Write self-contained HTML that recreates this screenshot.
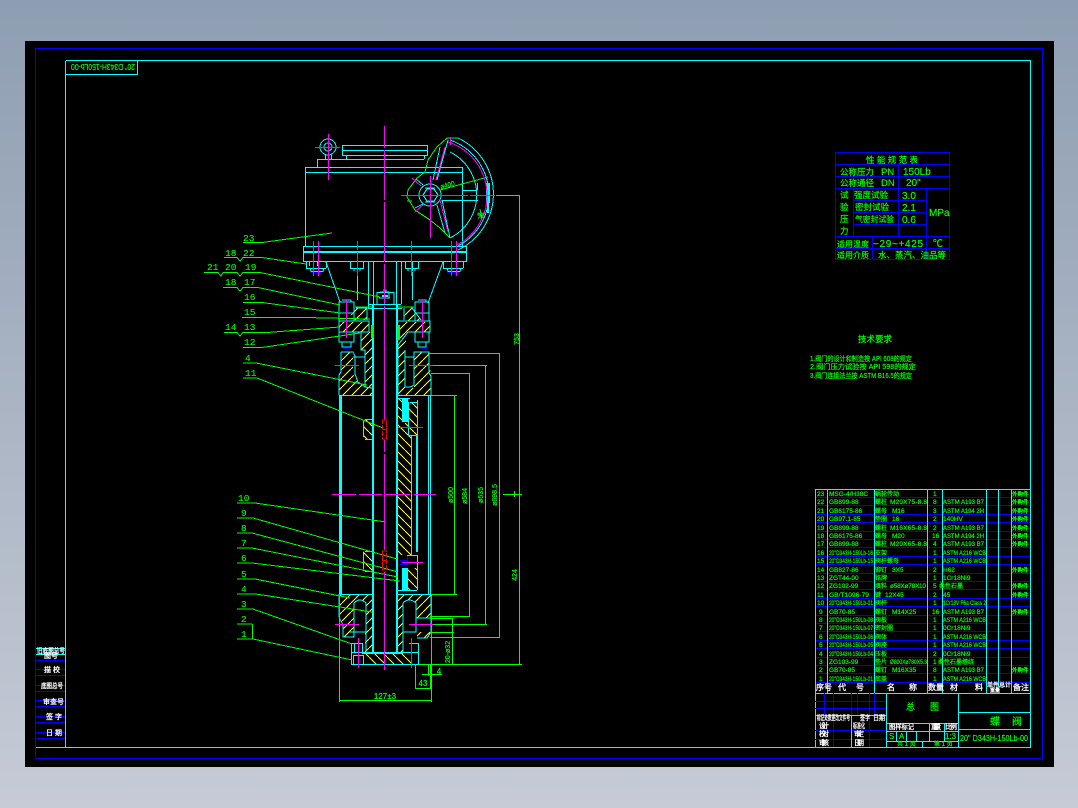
<!DOCTYPE html>
<html lang="zh">
<head>
<meta charset="utf-8">
<title>20" D343H-150Lb-00</title>
<style>
html,body{margin:0;padding:0;width:1078px;height:808px;overflow:hidden;background:linear-gradient(#8e9eb2,#c6cbd6)}
svg{position:absolute;left:0;top:0;display:block}
svg *{shape-rendering:crispEdges}
text{font-family:"Liberation Sans","Noto Sans CJK SC",sans-serif;fill:#0f0;stroke:#0f0;stroke-width:.2px;font-size:8px}
.w text{fill:#fff;stroke:#fff;stroke-width:.3px}
.l text{font-size:9.5px;font-family:"Liberation Mono","Noto Sans CJK SC",monospace;stroke-width:.1px}
.s text{font-size:6.5px}
.n text{font-size:6px}
.o text{font-size:5.5px;stroke-width:.35px}
.t text{font-size:7px}
</style>
</head>
<body>
<svg width="1078" height="808" viewBox="0 0 1078 808">
<defs>
<pattern id="h1" width="9" height="9" patternUnits="userSpaceOnUse"><path d="M0 9L9 0" stroke="#ff0" stroke-width="1"/></pattern>
<pattern id="h2" width="9" height="9" patternUnits="userSpaceOnUse"><path d="M0 0L9 9" stroke="#ff0" stroke-width="1"/></pattern>
</defs>
<rect x="25" y="41" width="1029" height="726" fill="#000"/>
<g fill="none">
<rect x="35.500" y="48.500" width="1007" height="710" stroke="#00f"/>
<path d="M65.500 61V747.500M36 747.500H1030.500V60.500H66" stroke="#0ff"/>
<path d="M137.500 60.500V74.500H66" stroke="#0ff"/>
<path d="M36 648.500H65M36 654.500H65" stroke="#0ff"/>
<path d="M36 660.500H65M36 669.500H65M36 675.500H65M36 685.500H65M36 691.500H65M36 700.500H65M36 706.500H65M36 716.500H65M36 722.500H65M36 732.500H65M36 738.500H65" stroke="#00f"/>
<path d="M835.500 152.500H949.500V259.500H835.500ZM835.500 164.500H949.500M835.500 176.500H949.500M835.500 188.500H949.500M853 200.500H926M853 212.500H926M853 224.500H926M835.500 236.500H949.500M835.500 248.500H949.500M853.500 188V236M898.500 164V188M898.500 188V236M926.500 188V259M872.500 236V259" stroke="#00f"/>
<path d="M815 497.500H1030M815 505.500H1030M815 514.500H1030M815 522.500H1030M815 531.500H1030M815 539.500H1030M815 547.500H1030M815 556.500H1030M815 564.500H1030M815 573.500H1030M815 581.500H1030M815 589.500H1030M815 598.500H1030M815 606.500H1030M815 615.500H1030M815 623.500H1030M815 631.500H1030M815 640.500H1030M815 648.500H1030M815 657.500H1030M815 665.500H1030M815 673.500H1030M815 682.500H1030" stroke="#00f"/>
<path d="M815.500 489.500H1030M815.500 489V747M827.500 489V693M874.500 489V693M927.500 489V693M942.500 489V693M986.500 489V693M998.500 489V687M1011.500 489V693M815 693.500H1030" stroke="#0ff"/>
<path d="M824.500 693V715M833.500 693V747M857.500 693V715M869.500 693V747M874.500 693V715M851.500 693V715M815 701.500H886M815 708.500H886M815 715.500H886M815 730.500H886M815 739.500H886" stroke="#00f"/>
<path d="M851.500 715V747M886.500 693V747M958.500 693V747M958 712.500H1030M958 729.500H1030M815 715.500H886M886 723.500H958M886 731.500H958M886 741.500H958M896.500 731V741M906.500 731V741M916.500 731V741M929.500 723V741M944.500 723V741M922.500 741V747" stroke="#0ff"/>
</g>

<!-- hatching -->
<g fill="url(#h1)" stroke="none">
<path d="M356 307H367V320H348Z"/>
<path d="M339 322H369V332H339Z"/>
<path d="M361 332H372V388H365V350H361Z"/>
<path d="M341 352H353V374L357 382L365 388H372V395H339V375L341 372Z"/>
<path d="M404 307H412L421 321H404Z"/>
<path d="M397 322H430V332H408L398 345Z"/>
<path d="M397 345L406 334L405 388H414V352H428L431 375V395H397Z"/>
<path d="M339 594H372V652H365V632H366V603Q360 597 354 603V637H343V625L339 617Z"/>
<path d="M397 594H431V618H416V603Q409 597 403 603V652H397Z"/>
<path d="M417 632H431V638H417Z"/>
</g>
<g fill="url(#h2)" stroke="none">
<path d="M396 398H402V423H411V555H396Z"/>
<path d="M408 402H417V435H408Z"/>
<path d="M408 568H417V590H408Z"/>
<path d="M363 419H373V439H363Z"/>
<path d="M363 551H373V571H363Z"/>
<path d="M363 653H403L418 664H372Z"/>
</g>

<!-- cyan drawing -->
<g fill="none" stroke="#0ff" stroke-width="1">
<path d="M305.500 167V246M305 167.500H462M305 172.500H462M462.500 167V246M317.500 159V167M317 159.500H424M342.500 145V156M342 145.500H427M342 150.500H427M342 155.500H427M427.500 145V156M346.500 156V159M424.500 156V159M325.500 155V159M331.500 155V159"/>
<path d="M442 200.500H478M462 190.500H477M477.500 183V190"/>
<path d="M303.500 246V262M303 246.500H466M303 251.500H466M303 252.500H466M303 261.500H466M466.500 246V262"/>
<path d="M368.500 262V304M373.500 262V304M396.500 262V304M401.500 262V304M357.500 262V300M412.500 262V300"/>
<path d="M306.500 262V268M326.500 262V268M306 268.500H326M309.500 262V266M317.500 262V266M310 268L311 271.500H323L324 268"/>
<path d="M350.500 262V268M363.500 262V268M350 268.500H364M354 268V271M360 268V271"/>
<path d="M405.500 262V268M418.500 262V268M405 268.500H419M408 268V271M415 268V271"/>
<path d="M443.500 262V268M463.500 262V268M443 268.500H463M447 268L448 271.500H460L461 268"/>
<path d="M372.500 304V652M373.500 304V652M396.500 304V652M397.500 304V652"/>
<path d="M368 304.500H401M368 308.500H402M368.500 304V308"/>
<path d="M339.500 395V594M340.500 395V594M341.500 395V594"/>
<path d="M372 395.500H339M372 594.500H339M397 395.500H431M397 594.500H431M430.500 395V594M428.500 395V594M417.500 400V552M416.500 435V552M411.500 435V555"/>
<path d="M363.500 421V437M365 419.500H373M365 439.500H373M363.500 553V569M365 551.500H373M365 571.500H373"/>
<path d="M396 398.500H410M410 402.500H417M408.500 402V435M408 435.500H417M417.500 402V435"/>
<path d="M407 555.500H417M407.500 555V562M417.500 555V590M408 590.500H417M396 590.500H408"/>
<path d="M351.500 643V664M418.500 643V664M351 664.500H419M351 643.500H362M409 643.500H419M352 652.500H362M403 652.500H419M362 652.500H403M362 653.500H403"/>
<path d="M353.500 655V664M363.500 655V664M353 655.500H364M354.500 643V652M362.500 643V652"/>
<path d="M377 292V304M394 292V304M377 292.500H394"/>
<!-- supports and yoke -->
<path d="M326 262L340 302M443 262L428 303"/>
<path d="M339 302H354V313H339ZM342 300H351V302M415 302H429V313H415ZM418 300H426V302M339 313V321M354 313V321M415 313V321M429 313V321"/>
<path d="M339 321H369V332H339ZM397 321H430V332H408"/>
<path d="M356 308H367V320M404 308V320M412 308L421 320"/>
<path d="M339 332H354V342H339ZM342 342V347H351V342M415 332H429V342H415ZM418 342V347H426V342"/>
<path d="M361 332V350H365V387L372 388M365 350V387"/>
<path d="M408 332L398 345V395"/>
<path d="M341 352H353L355 356V374L358 382L365 387M341 352V372L339 375V395"/>
<path d="M353 357H365"/>
<path d="M405 350V387Q410 388 414 385V352H429V373L431 376V395M405 357H414"/>
<path d="M354 603Q360 597 366 603V632M354 603V637H343V625L339 617V594M366 632V652M349 632H366"/>
<path d="M403 603Q409 597 416 603V632H403V603M403 632V652M416 618H431M417 638H427L431 632V594"/>
<!-- handwheel -->
<path d="M458 138A62 62 0 0 1 458 250"/>
<path d="M450 140A58 58 0 0 1 458 246"/>
<path d="M450 152A48 48 0 0 1 450 238"/>
<path d="M448 140L437 180M440 147L433 180M450 238L442 200M445 233L437 205M416 179L423 185M415 208L423 204"/>
<circle cx="430" cy="195" r="11"/>
<path d="M423 195L427 189H434L438 195L434 201H427Z"/>
<path d="M425 188H435M425 202H435"/>
<circle cx="328" cy="147" r="8"/>
<circle cx="328" cy="147" r="4"/>
<path d="M379 298H390M380 292H389V298M383 290H386V292"/>
</g>
<path d="M486 183h4v20h-4zM487 203h2v10h-2z" fill="#0ff"/>
<g fill="#0ff">
<rect x="402" y="398" width="6" height="24"/><rect x="402" y="568" width="6" height="22"/>
<rect x="382" y="295" width="6" height="2"/>
</g>
<g fill="#00f">
<rect x="311" y="272" width="11" height="1"/><rect x="353" y="271" width="7" height="1"/><rect x="408" y="271" width="7" height="1"/><rect x="447" y="272" width="12" height="1"/>
<rect x="400" y="560" width="8" height="1"/><rect x="400" y="564" width="8" height="1"/><rect x="407" y="556" width="1" height="9"/><rect x="343" y="348" width="6" height="1"/><rect x="421" y="348" width="6" height="1"/>
</g>

<!-- green -->
<g fill="none" stroke="#0f0" stroke-width="1">
<path d="M458 138L447 138L437 147L428 160L425 172L417 178L408 190L407 197L415 210L430 220L440 228L450 238"/>
<path d="M440 190L488 177M407 201H412M480 209L482 219M477 214L485 214"/>
<path d="M243 242.500H262L332 233"/>
<path d="M224 257.500H237L240 261L243 257.500H262L306 264"/>
<path d="M204 272.500H218L221 276L223 272.500H237L240 276L243 272.500H260L380 297"/>
<path d="M223 287.500H237L240 291L243 287.500H258L340 305"/>
<path d="M243 302.500H262L340 313"/>
<path d="M242 317.500H305L370 319"/>
<path d="M224 332.500H237L240 336L243 332.500H267L340 327"/>
<path d="M243 347.500H262L360 333"/>
<path d="M243 363H256L367 385"/>
<path d="M243 378H257L383 428"/>
<path d="M237 503H255L386 522"/>
<path d="M237 518H253L397 559"/>
<path d="M237 533H252L398 572"/>
<path d="M237 548H252L398 577"/>
<path d="M237 563H252L400 581"/>
<path d="M237 579H255L350 598"/>
<path d="M237 594H256L372 612"/>
<path d="M237 609H253L352 644"/>
<path d="M237 624H252M237 639H253L352 660"/>
<path d="M252.500 624V639"/>
<path d="M355 307H372M398 307H414"/>
<path d="M496 195.500H519.500M519.500 195V664M419 664.500H522M503 494.500H522M514.500 491V497"/>
<path d="M428 353.500H500M433 365.500H487M431 373.500H470M431 395.500H457M431 594.500H457M430 616.500H470M430 624.500H487M430 637.500H500"/>
<path d="M454.500 395V594M469.500 373V616M485.500 365V624M499.500 353V637"/>
<path d="M430 618.500H453M430 632.500H454M452.500 618V664"/>
<path d="M339.500 594V702M431.500 594V702M339 700.500H431M415.500 664V688M430.500 664V688M415 688.500H431M422 674.500H442M428.500 664V676"/>
</g>
<rect x="371" y="325" width="3" height="13" fill="#0f0"/>
<rect x="397" y="325" width="3" height="15" fill="#0f0"/>

<!-- magenta -->
<g fill="none" stroke="#f0f">
<path d="M384.500 126V148M384.500 150V200M384.500 202V262M384.500 264V304M384.500 306V420M384.500 440V452M384.500 454V550M384.500 572V670"/>
<path d="M315 147.500H340M328.500 134V180M401 195.500H468M470 195.500H495M430.500 176V238M450.500 137V145"/>
<path d="M332 494.500H356M359 494.500H382M386 494.500H410M414 494.500H436"/>
<path d="M398 427.500H423M402 562.500H423M335 365.500H359M409 365.500H433M335 624.500H359M409 624.500H433"/>
<path d="M346.500 300V338M422.500 300V338"/>
<path d="M358.500 638V668M411.500 638V668"/>
<path d="M313.500 241V276M318.500 241V276M357.500 241V250M357.500 252V276M411.500 241V250M411.500 252V276M451.500 241V276M456.500 241V276"/>
<path d="M412 178L421 186M415 212L424 204M445 147L436 180M440 200L448 232M448 142A56 56 0 0 1 457 245"/>
</g>
<g fill="none" stroke="#f00" stroke-dasharray="5 1">
<path d="M382.500 420H386.500V439H382.500ZM382.500 551H386.500V570H382.500Z"/>
<path d="M383 429.500H386M383 560.500H386"/>
</g>

<!-- labels -->
<g class="l">
<text x="243" y="241">23</text>
<text x="225" y="256">18</text><text x="243" y="256">22</text>
<text x="207" y="270">21</text><text x="225" y="270">20</text><text x="245" y="270">19</text>
<text x="225" y="285">18</text><text x="244" y="285">17</text>
<text x="244" y="300">16</text><text x="244" y="315">15</text>
<text x="225" y="330">14</text><text x="244" y="330">13</text>
<text x="244" y="345">12</text>
<text x="245" y="361">4</text>
<text x="245" y="376">11</text>
<text x="238" y="501">10</text>
<text x="241" y="516">9</text><text x="241" y="531">8</text><text x="241" y="546">7</text><text x="241" y="561">6</text><text x="241" y="577">5</text><text x="241" y="592">4</text><text x="241" y="607">3</text><text x="241" y="622">2</text><text x="241" y="637">1</text>
</g>
<g class="t" text-anchor="middle">
<text transform="translate(453 495) rotate(-90)">ø500</text>
<text transform="translate(467 496) rotate(-90)">ø584</text>
<text transform="translate(483 495) rotate(-90)">ø635</text>
<text transform="translate(497 495) rotate(-90)">ø698.5</text>
<text transform="translate(519 339) rotate(-90)">753</text>
<text transform="translate(517 575) rotate(-90)">424</text>
<text transform="translate(450 652) rotate(-90)">20-ø32</text>
<text x="385" y="699" style="font-size:8px">127±3</text>
<text x="423" y="686" style="font-size:8px">43</text><text x="439" y="674" style="font-size:8px">4</text>
<text transform="translate(448 187) rotate(-15)" style="font-size:6.500px">ø400</text>
<text x="481" y="218">米</text>
</g>

<!-- tag upside-down -->
<text transform="rotate(180 101 68)" x="67" y="72" textLength="64" lengthAdjust="spacingAndGlyphs" style="font-size:8px">20" D343H-150Lb-00</text>

<!-- left strip text -->
<g class="w t">
<text x="37" y="653" textLength="28" lengthAdjust="spacingAndGlyphs">旧底图总号</text>
<text x="44" y="658">图号</text>
<text x="44" y="672">描 校</text>
<text x="41" y="688" textLength="22" lengthAdjust="spacingAndGlyphs">底图总号</text>
<text x="43" y="704">审查号</text>
<text x="46" y="719">签 字</text>
<text x="46" y="735">日 期</text>
</g>

<!-- spec table text -->
<text x="866" y="163" style="font-size:8.500px">性 能 规 范 表</text>
<text x="840" y="175" style="font-size:8.500px">公称压力</text><text x="881" y="175" style="font-size:9.500px">PN</text><text x="903" y="175" style="font-size:10px">150Lb</text>
<text x="840" y="186" style="font-size:8.500px">公称通径</text><text x="881" y="186" style="font-size:9.500px">DN</text><text x="906" y="186" style="font-size:10px">20"</text>
<g style="font-size:8.500px">
<text x="840" y="198" style="font-size:8.500px">试</text><text x="840" y="210" style="font-size:8.500px">验</text><text x="840" y="222" style="font-size:8.500px">压</text><text x="840" y="234" style="font-size:8.500px">力</text>
<text x="854" y="198" style="font-size:8.500px">强度试验</text><text x="855" y="210" style="font-size:8.500px">密封试验</text><text x="855" y="222" style="font-size:7.800px">气密封试验</text>
</g>
<text x="902" y="199" style="font-size:10px">3.0</text><text x="902" y="211" style="font-size:10px">2.1</text><text x="902" y="223" style="font-size:10px">0.6</text>
<text x="929" y="216" style="font-size:10px">MPa</text>
<text x="873" y="247" textLength="50" style="font-size:10px">−29~+425</text>
<text x="933" y="247" style="font-size:10px">℃</text>
<text x="837" y="247">适用温度</text>
<text x="837" y="258">适用介质</text>
<text x="878" y="258" style="font-size:8.500px">水、蒸汽、油品等</text>

<!-- tech req -->
<text x="858" y="342" style="font-size:8.500px">技术要求</text>
<text x="810" y="361" textLength="102" lengthAdjust="spacingAndGlyphs" style="font-size:7px">1.阀门的设计和制造按 API 608的规定</text>
<text x="810" y="369" textLength="106" lengthAdjust="spacingAndGlyphs" style="font-size:7px">2.阀门压力试验按 API 598的规定</text>
<text x="810" y="378" textLength="102" lengthAdjust="spacingAndGlyphs" style="font-size:7px">3.阀门连接法兰按 ASTM B16.5的规定</text>

<!-- parts list: numbers -->
<g class="s">
<text x="817" y="496">23</text><text x="817" y="504">22</text><text x="817" y="513">21</text><text x="817" y="521">20</text><text x="817" y="530">19</text><text x="817" y="538">18</text><text x="817" y="546">17</text><text x="817" y="555">16</text><text x="817" y="563">15</text><text x="817" y="572">14</text><text x="817" y="580">13</text><text x="817" y="588">12</text><text x="817" y="597">11</text><text x="817" y="605">10</text><text x="819" y="614">9</text><text x="819" y="622">8</text><text x="819" y="630">7</text><text x="819" y="639">6</text><text x="819" y="647">5</text><text x="819" y="656">4</text><text x="819" y="664">3</text><text x="819" y="672">2</text><text x="819" y="681">1</text>
<!-- codes -->
<text x="829" y="496">MSG-4/H38C</text><text x="829" y="504">GB899-88</text><text x="829" y="513">GB6175-86</text><text x="829" y="521">GB97.1-85</text><text x="829" y="530">GB899-88</text><text x="829" y="538">GB6175-86</text><text x="829" y="546">GB899-88</text>
<text x="829" y="555" textLength="44" lengthAdjust="spacingAndGlyphs">20"D343H-150Lb-16</text><text x="829" y="563" textLength="44" lengthAdjust="spacingAndGlyphs">20"D343H-150Lb-15</text>
<text x="829" y="572">GB827-86</text><text x="829" y="580">ZGT44-00</text><text x="829" y="588">ZG102-99</text><text x="829" y="597" textLength="40" lengthAdjust="spacingAndGlyphs">GB/T1096-79</text>
<text x="829" y="605" textLength="44" lengthAdjust="spacingAndGlyphs">20"D343H-150Lb-01</text><text x="829" y="614">GB70-85</text>
<text x="829" y="622" textLength="44" lengthAdjust="spacingAndGlyphs">20"D343H-150Lb-08</text><text x="829" y="630" textLength="44" lengthAdjust="spacingAndGlyphs">20"D343H-150Lb-07</text><text x="829" y="639" textLength="44" lengthAdjust="spacingAndGlyphs">20"D343H-150Lb-06</text><text x="829" y="647" textLength="44" lengthAdjust="spacingAndGlyphs">20"D343H-150Lb-05</text><text x="829" y="656" textLength="44" lengthAdjust="spacingAndGlyphs">20"D343H-150Lb-04</text>
<text x="829" y="664">ZG103-99</text><text x="829" y="672">GB70-85</text><text x="829" y="681" textLength="44" lengthAdjust="spacingAndGlyphs">20"D343H-150Lb-01</text>
<!-- quantity -->
<text x="933" y="496">1</text><text x="933" y="504">8</text><text x="933" y="513">3</text><text x="933" y="521">2</text><text x="933" y="530">2</text><text x="932" y="538">16</text><text x="933" y="546">4</text><text x="933" y="555">1</text><text x="933" y="563">1</text><text x="933" y="572">2</text><text x="933" y="580">1</text><text x="933" y="588">5</text><text x="933" y="597">2</text><text x="933" y="605">1</text><text x="932" y="614">16</text><text x="933" y="622">1</text><text x="933" y="630">1</text><text x="933" y="639">1</text><text x="933" y="647">1</text><text x="933" y="656">2</text><text x="933" y="664">1</text><text x="933" y="672">8</text><text x="933" y="681">1</text>
<!-- spec -->
<text x="890" y="504" textLength="37">M20X75-8.8</text><text x="892" y="513">M16</text><text x="892" y="521">16</text><text x="890" y="530" textLength="37">M16X65-8.8</text><text x="892" y="538">M20</text><text x="890" y="546" textLength="37">M20X65-8.8</text><text x="892" y="572">3X5</text><text x="890" y="588" textLength="36">ø58Xø78X10</text><text x="885" y="597">12X45</text><text x="892" y="614">M14X25</text><text x="890" y="664" textLength="37" lengthAdjust="spacingAndGlyphs">Ø800Xø780X5.3</text><text x="892" y="672">M16X35</text>
<!-- material -->
<text x="943" y="504" textLength="41" lengthAdjust="spacingAndGlyphs">ASTM A193 B7</text><text x="943" y="513" textLength="41" lengthAdjust="spacingAndGlyphs">ASTM A194 2H</text><text x="943" y="521">140HV</text><text x="943" y="530" textLength="41" lengthAdjust="spacingAndGlyphs">ASTM A193 B7</text><text x="943" y="538" textLength="41" lengthAdjust="spacingAndGlyphs">ASTM A194 2H</text><text x="943" y="546" textLength="41" lengthAdjust="spacingAndGlyphs">ASTM A193 B7</text><text x="943" y="555" textLength="43" lengthAdjust="spacingAndGlyphs">ASTM A216 WCB</text><text x="943" y="563" textLength="43" lengthAdjust="spacingAndGlyphs">ASTM A216 WCB</text><text x="943" y="572">H62</text><text x="943" y="580">1Cr18Ni9</text><text x="943" y="597">45</text><text x="943" y="605" textLength="43" lengthAdjust="spacingAndGlyphs">1Cr13V F6a Class 2</text><text x="943" y="614" textLength="41" lengthAdjust="spacingAndGlyphs">ASTM A193 B7</text><text x="943" y="622" textLength="43" lengthAdjust="spacingAndGlyphs">ASTM A216 WCB</text><text x="943" y="630">0Cr18Ni9</text><text x="943" y="639" textLength="43" lengthAdjust="spacingAndGlyphs">ASTM A216 WCB</text><text x="943" y="647" textLength="43" lengthAdjust="spacingAndGlyphs">ASTM A216 WCB</text><text x="943" y="656">0Cr18Ni9</text><text x="943" y="672" textLength="41" lengthAdjust="spacingAndGlyphs">ASTM A193 B7</text><text x="943" y="681" textLength="43" lengthAdjust="spacingAndGlyphs">ASTM A216 WCB</text>
</g>
<g class="n">
<text x="875" y="496">蜗轮传动</text><text x="875" y="504">螺柱</text><text x="875" y="513">螺母</text><text x="875" y="521">垫圈</text><text x="875" y="530">螺柱</text><text x="875" y="538">螺母</text><text x="875" y="546">螺柱</text><text x="875" y="555">支架</text><text x="875" y="563">阀杆螺母</text><text x="875" y="572">铆钉</text><text x="875" y="580">铭牌</text><text x="875" y="588">填料</text><text x="875" y="597">键</text><text x="875" y="605">阀杆</text><text x="875" y="614">螺钉</text><text x="875" y="622">阀板</text><text x="875" y="630">密封圈</text><text x="875" y="639">阀体</text><text x="875" y="647">阀座</text><text x="875" y="656">压板</text><text x="875" y="664">垫片</text><text x="875" y="672">螺钉</text><text x="875" y="681">底盖</text>
<text x="939" y="588">柔性石墨</text><text x="938" y="664">柔性石墨缠绕</text>
</g>
<g class="o">
<text x="1012" y="496">外购件</text><text x="1012" y="504">外购件</text><text x="1012" y="513">外购件</text><text x="1012" y="521">外购件</text><text x="1012" y="530">外购件</text><text x="1012" y="538">外购件</text><text x="1012" y="546">外购件</text><text x="1012" y="572">外购件</text><text x="1012" y="588">外购件</text><text x="1012" y="597">外购件</text><text x="1012" y="614">外购件</text><text x="1012" y="672">外购件</text>
</g>

<!-- header row -->
<g class="w">
<text x="816" y="690">序号</text><text x="838" y="690">代</text><text x="856" y="690">号</text>
<text x="887" y="690">名</text><text x="909" y="690">称</text><text x="928" y="690">数量</text>
<text x="950" y="690">材</text><text x="975" y="690">料</text>
<text x="987" y="687" style="font-size:6px">单件</text><text x="999" y="687" style="font-size:6px">总计</text><text x="990" y="692" style="font-size:5px">重量</text>
<text x="1013" y="690">备注</text>
</g>

<!-- title block text -->
<g class="w t">
<text x="817" y="720" textLength="33" lengthAdjust="spacingAndGlyphs">标记处数更改文件号</text><text x="860" y="720" textLength="10" lengthAdjust="spacingAndGlyphs">签字</text><text x="873" y="720" textLength="12" lengthAdjust="spacingAndGlyphs">日期</text>
<text x="819" y="728" textLength="10">设计</text><text x="819" y="736" textLength="10">校对</text><text x="819" y="745" textLength="10">审核</text>
<text x="853" y="728" textLength="12" lengthAdjust="spacingAndGlyphs">标准化</text><text x="854" y="736" textLength="10">审定</text><text x="854" y="745" textLength="10">日期</text>
<text x="889" y="729" textLength="25" lengthAdjust="spacingAndGlyphs">图样标记</text><text x="931" y="729" textLength="10">重量</text><text x="945" y="729" textLength="12">比例</text>
</g>
<text x="906" y="710" style="font-size:9px">总</text><text x="930" y="710" style="font-size:9px">图</text>
<text x="889" y="739">S</text><text x="899" y="739">A</text><text x="945" y="739">1:3</text>
<text x="897" y="746" style="font-size:6px">共 1 页</text><text x="934" y="746" style="font-size:6px">第 1 页</text>
<text x="990" y="725" style="font-size:10px">蝶</text><text x="1012" y="725" style="font-size:10px">阀</text>
<text x="960" y="741" textLength="68" lengthAdjust="spacingAndGlyphs">20" D343H-150Lb-00</text>
</svg>
</body>
</html>
